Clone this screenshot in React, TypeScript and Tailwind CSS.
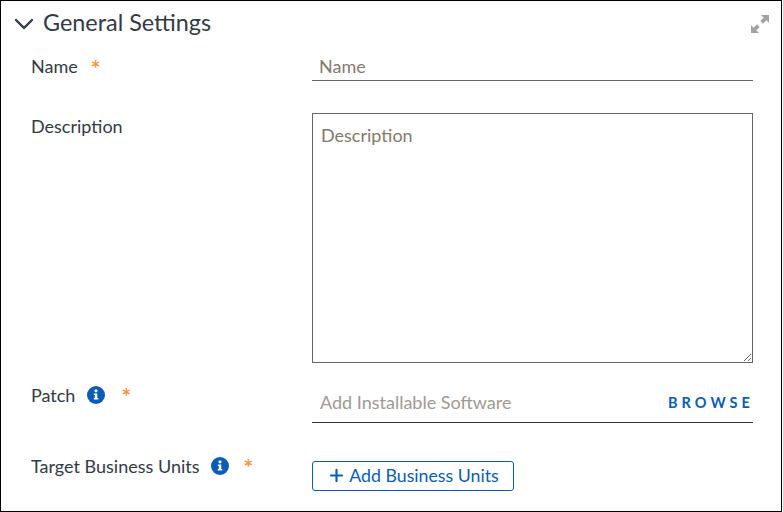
import { ChevronDown, Plus } from "lucide-react";

function Required() {
  return <span className="text-[#f9943f] text-[23px] font-bold leading-none h-[14px] relative top-[-3px]">*</span>;
}

function InfoIcon() {
  return (
    <svg width="18" height="18" viewBox="0 0 18 18" className="shrink-0">
      <circle cx="9" cy="9" r="9" fill="#0b5cb5" />
      <rect x="7.6" y="3.6" width="2.8" height="2.6" rx="0.6" fill="#fff" />
      <path d="M6.8 7.4h3.5v4.6h1v1.6H6.8V12h1v-3h-1z" fill="#fff" />
    </svg>
  );
}

function ExpandIcon() {
  return (
    <svg width="18" height="18" viewBox="0 0 18 18" className="shrink-0">
      <path d="M10 0h8v8l-2.7-2.7-3.4 3.4-2.6-2.6 3.4-3.4z" fill="#a3a3a3" />
      <path d="M0 10v8h8l-2.7-2.7 3.4-3.4-2.6-2.6-3.4 3.4z" fill="#a3a3a3" />
    </svg>
  );
}

export default function App() {
  return (
    <div className="w-[783px] h-[512px] bg-white font-['Lato','Open_Sans',sans-serif] text-[#333a45] overflow-hidden">
      <div className="w-[782px] h-[512px] border border-black">
        {/* Header */}
        <div className="flex items-center justify-between h-[46px] pl-[7px] pr-[12px]">
          <div className="flex items-center gap-[3px]">
            <ChevronDown className="w-[32px] h-[32px] text-[#333a45]" strokeWidth={1.75} />
            <h2 className="text-[23.4px] leading-none relative top-[-1px]">General Settings</h2>
          </div>
          <ExpandIcon />
        </div>

        <div className="grid grid-cols-[281px_441px] pl-[30px]">
          {/* Name */}
          <div className="flex items-center gap-[13px] h-[34px] pt-[5px] text-[18px]">
            <span>Name</span>
            <Required />
          </div>
          <div className="h-[34px] border-b border-[#666] pl-[7px] pt-[6px] flex items-center text-[18px] text-[#85796d]">
            Name
          </div>

          {/* Description */}
          <div className="pt-[33px] text-[18px] leading-[24px]">Description</div>
          <div className="pt-[32px]">
            <textarea
              placeholder="Description"
              className="block w-[441px] h-[250px] border border-[#666] px-[8px] py-[9px] text-[18px] leading-[24px] outline-none placeholder:text-[#85796d]"
            />
          </div>

          {/* Patch */}
          <div className="flex items-center gap-[12px] pt-[20px] h-[44px] text-[18px]">
            <span>Patch</span>
            <InfoIcon />
            <span className="ml-[4px] flex">
              <Required />
            </span>
          </div>
          <div className="mt-[19px] h-[41px] border-b border-[#333] pl-[8px] pr-[2px] flex items-center justify-between text-[18px] text-[#a09a93]">
            <span>Add Installable Software</span>
            <span className="text-[14.5px] font-bold tracking-[0.28em] text-[#0b5cb5] mr-[-3px] pt-[2px]">BROWSE</span>
          </div>

          {/* Target Business Units */}
          <div className="flex items-center gap-[11px] pt-[30px] h-[56px] text-[18px]">
            <span>Target Business Units</span>
            <InfoIcon />
            <span className="ml-[4px] flex">
              <Required />
            </span>
          </div>
          <div className="pt-[38px]">
            <button className="flex items-center justify-center gap-[3px] w-[202px] h-[30px] pb-[1px] border border-[#0b5cb5] rounded-[3px] text-[17.75px] text-[#0b5cb5]">
              <Plus className="w-[19px] h-[19px]" strokeWidth={2.75} />
              Add Business Units
            </button>
          </div>
        </div>
      </div>
    </div>
  );
}
